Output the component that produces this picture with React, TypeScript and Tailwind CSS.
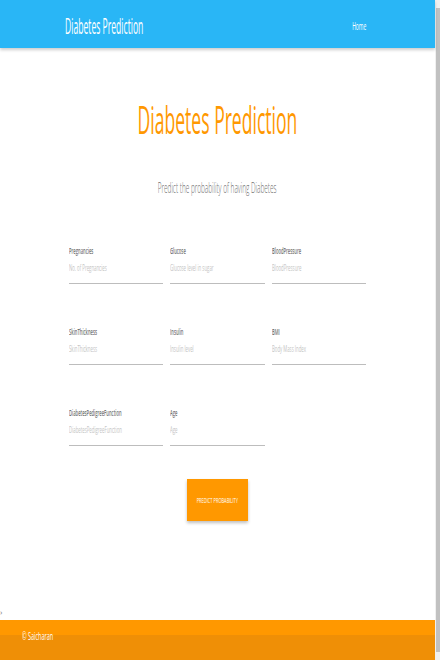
import React from "react";

const font = { fontFamily: '"Open Sans", "Liberation Sans", sans-serif' };

function Field({ label, ph }: { label: string; ph: string }) {
  return (
    <div className="flex flex-col">
      <div className="h-[14px] flex items-center">
        <span className="inline-block whitespace-nowrap origin-left scale-x-[0.46] text-[9px] font-semibold text-[#757575]">{label}</span>
      </div>
      <div className="h-[20px] flex items-center">
        <span className="inline-block whitespace-nowrap origin-left scale-x-[0.48] text-[9px] text-[#c4c4c4]">{ph}</span>
      </div>
      <div className="border-b border-[#bdbdbd] mt-[5px]" />
    </div>
  );
}

export default function App() {
  return (
    <div className="w-[440px] h-[660px] flex overflow-hidden bg-white" style={font}>
      <div className="w-[435px] h-full flex flex-col">
        <nav className="h-[48px] shrink-0 bg-[#29b6f6] flex items-center justify-between pt-[5px] pl-[65px] pr-[69px] shadow-[0_2px_3px_rgba(0,0,0,0.2)] relative z-10">
          <span className="inline-block whitespace-nowrap origin-left scale-x-[0.41] text-[21px] text-white">Diabetes Prediction</span>
          <span className="inline-block whitespace-nowrap origin-right scale-x-[0.5] text-[10px] text-white">Home</span>
        </nav>
        <main className="flex-1 flex flex-col items-center">
          <div className="mt-[49px] h-[44px] flex items-center justify-center">
            <span className="inline-block whitespace-nowrap origin-center scale-x-[0.45] text-[39px] text-[#ff9800]">Diabetes Prediction</span>
          </div>
          <div className="mt-[36px] h-[20px] flex items-center justify-center">
            <span className="inline-block whitespace-nowrap origin-center scale-x-[0.46] text-[14px] font-light text-[#6f6f6f]">Predict the probability of having Diabetes</span>
          </div>
          <div className="mt-[47px] w-[298px] grid grid-cols-3 gap-x-[7px] gap-y-[41px]">
            <Field label="Pregnancies" ph="No. of Pregnancies" />
            <Field label="Glucose" ph="Glucose level in sugar" />
            <Field label="BloodPressure" ph="BloodPressure" />
            <Field label="SkinThickness" ph="SkinThickness" />
            <Field label="Insulin" ph="Insulin level" />
            <Field label="BMI" ph="Body Mass Index" />
            <Field label="DiabetesPedigreeFunction" ph="DiabetesPedigreeFunction" />
            <Field label="Age" ph="Age" />
          </div>
          <button className="mt-[33px] w-[61px] h-[42px] bg-[#ff9800] flex items-center justify-center shadow-[0_2px_3px_rgba(0,0,0,0.25)]">
            <span className="inline-block whitespace-nowrap origin-center scale-x-[0.5] text-[8px] text-white">PREDICT PROBABILITY</span>
          </button>
          <div className="flex-1" />
          <div className="self-start h-[10px] flex items-center">
            <span className="text-[8px] text-[#777] leading-none">›</span>
          </div>
          <div className="h-[3px]" />
        </main>
        <footer className="h-[40px] shrink-0 flex flex-col">
          <div className="h-[15px] bg-[#ff9800] pl-[22px] pt-[2px]">
            <span className="relative z-10 inline-block whitespace-nowrap origin-left scale-x-[0.5] text-[11px] leading-[13px] text-white">© Saicharan</span>
          </div>
          <div className="flex-1 bg-[#ef8f06]" />
        </footer>
      </div>
      <div className="w-[5px] h-full bg-[#f0f0f0] flex flex-col items-center py-[8px]">
        <div className="w-[4px] flex-1 bg-[#c1c1c1]" />
      </div>
    </div>
  );
}
